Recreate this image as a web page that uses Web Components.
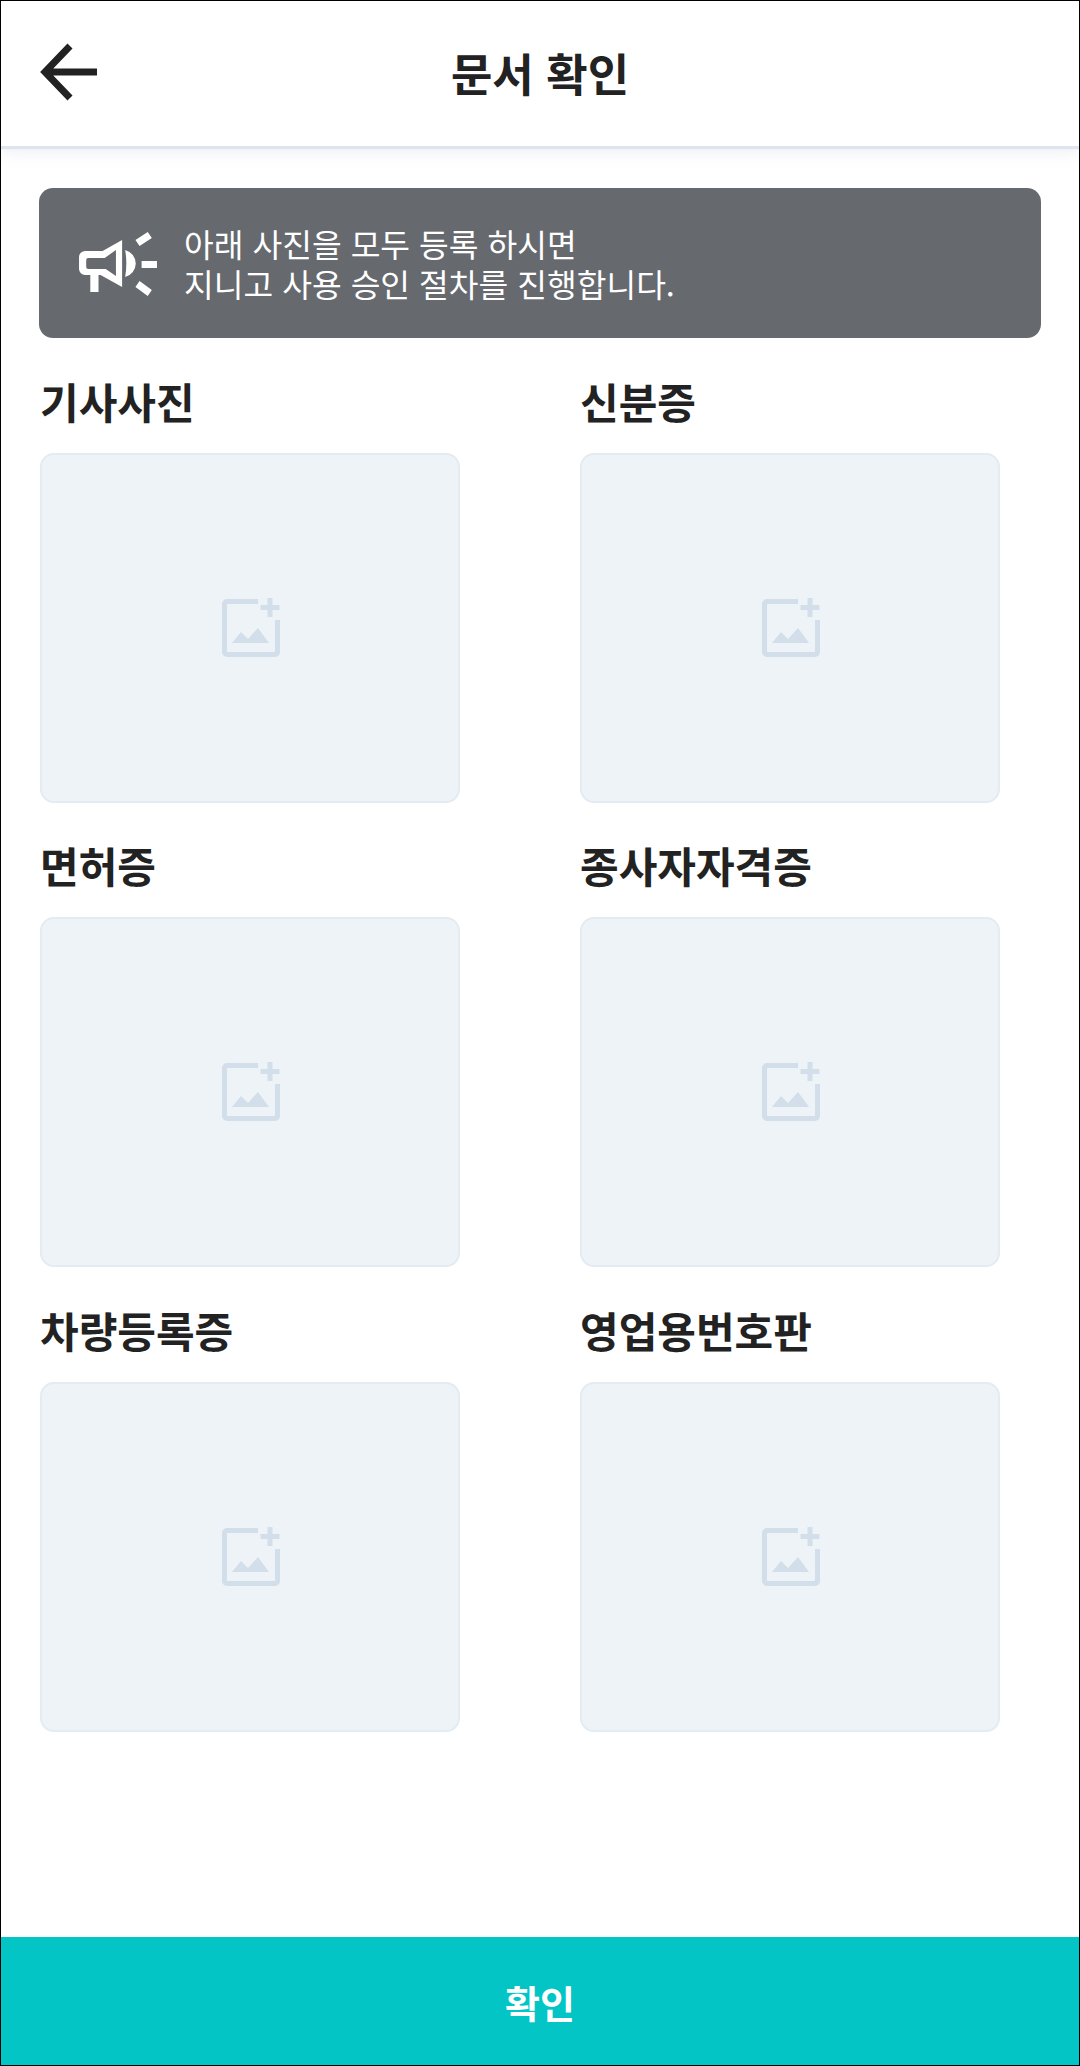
<!DOCTYPE html>
<html lang="ko">
<head>
<meta charset="utf-8">
<title>문서 확인</title>
<style>
    html, body { margin: 0; padding: 0; background: #fff; }
    body { font-family: "Noto Sans CJK KR", "Noto Sans", sans-serif; }
</style>
</head>
<body>
<doc-screen>
    <app-header slot="header">문서 확인</app-header>
    <notice-banner>아래 사진을 모두 등록 하시면<br>지니고 사용 승인 절차를 진행합니다.</notice-banner>
    <photo-grid>
        <photo-slot>기사사진</photo-slot>
        <photo-slot>신분증</photo-slot>
        <photo-slot>면허증</photo-slot>
        <photo-slot>종사자자격증</photo-slot>
        <photo-slot>차량등록증</photo-slot>
        <photo-slot>영업용번호판</photo-slot>
    </photo-grid>
    <confirm-button slot="footer">확인</confirm-button>
</doc-screen>

<script>
class DocScreen extends HTMLElement {
    constructor() {
        super();
        const shadow = this.attachShadow({ mode: 'open' });
        shadow.innerHTML = /*html*/`
        <style>
            :host {
                display: flex;
                flex-direction: column;
                box-sizing: border-box;
                width: 1080px;
                height: 2066px;
                border: 1px solid #000;
                background: #fff;
                overflow: hidden;
            }
            main {
                flex: 1;
                padding: 42px 38px 0 37px;
            }
        </style>
        <slot name="header"></slot>
        <main><slot></slot></main>
        <slot name="footer"></slot>
        `;
    }
}

class AppHeader extends HTMLElement {
    constructor() {
        super();
        const shadow = this.attachShadow({ mode: 'open' });
        shadow.innerHTML = /*html*/`
        <style>
            :host {
                display: block;
                position: relative;
                z-index: 1;
                height: 145px;
                background: #fff;
                box-shadow: 0 3px 1px #dfe5ef, 0 6px 14px rgba(190, 200, 218, 0.3);
            }
            .bar {
                display: flex;
                align-items: center;
                justify-content: center;
                box-sizing: border-box;
                height: 100%;
                padding-bottom: 2px;
                color: #222;
                font-size: 45px;
                font-weight: 700;
            }
            svg { position: absolute; left: 35px; top: 39px; }
        </style>
        <div class="bar">
            <svg width="62" height="64" viewBox="0 0 62 64"><path fill="none" stroke="#222" stroke-width="7" d="M61 32H9M34 6L9 32l25 26"></path></svg>
            <slot></slot>
        </div>
        `;
    }
}

class NoticeBanner extends HTMLElement {
    constructor() {
        super();
        const shadow = this.attachShadow({ mode: 'open' });
        shadow.innerHTML = /*html*/`
        <style>
            :host {
                display: flex;
                align-items: center;
                box-sizing: border-box;
                width: 1002px;
                height: 150px;
                margin-left: 1px;
                padding-left: 39px;
                gap: 26px;
                border-radius: 14px;
                background: #66696e;
                color: #fff;
                font-size: 32.3px;
                line-height: 40px;
            }
            svg { flex: none; }
        </style>
        <svg width="80" height="66" viewBox="0 0 78 66" preserveAspectRatio="none" fill="#fff">
            <path fill-rule="evenodd" d="M43 10V57L22 45H20V62H12V45H7a6 6 0 0 1-6-6V27a6 6 0 0 1 6-6H24zM37 20L26 28H10a2 2 0 0 0-2 2v7a2 2 0 0 0 2 2H27l10 7z"></path>
            <path d="M46 20a14 14 0 0 1 0 27c1.5-9 1.5-18 0-27z"></path>
            <path d="M56 10l12-8 4 6-12 8zM62 31h15v7H62zM60 51l12 9-4 6-12-9z"></path>
        </svg>
        <div><slot></slot></div>
        `;
    }
}

class PhotoGrid extends HTMLElement {
    constructor() {
        super();
        const shadow = this.attachShadow({ mode: 'open' });
        shadow.innerHTML = /*html*/`
        <style>
            :host {
                display: grid;
                grid-template-columns: 420px 420px;
                column-gap: 120px;
                row-gap: 34.4px;
                padding: 35px 0 0 2px;
            }
        </style>
        <slot></slot>
        `;
    }
}

class PhotoSlot extends HTMLElement {
    constructor() {
        super();
        const shadow = this.attachShadow({ mode: 'open' });
        shadow.innerHTML = /*html*/`
        <style>
            :host { display: block; }
            .label {
                color: #222;
                font-size: 42px;
                font-weight: 700;
                line-height: 56px;
                margin-bottom: 24px;
                white-space: nowrap;
            }
            .box {
                display: flex;
                align-items: center;
                justify-content: center;
                box-sizing: border-box;
                height: 350px;
                background: #eef3f7;
                border: 2px solid #e3ebf3;
                border-radius: 14px;
            }
        </style>
        <div class="label"><slot></slot></div>
        <div class="box">
            <svg width="60" height="60" viewBox="0 0 60 60" fill="#d2deea">
                <path d="M38 1H7a5 5 0 0 0-5 5V54a5 5 0 0 0 5 5H55a5 5 0 0 0 5-5V22H55V53a1 1 0 0 1-1 1H8a1 1 0 0 1-1-1V7a1 1 0 0 1 1-1H38z"></path>
                <path d="M47.5 0h5v7h7v5h-7v7h-5v-7h-7V7h7z"></path>
                <path d="M12 45L21 34l7 7L38 30l11 15z"></path>
            </svg>
        </div>
        `;
    }
}

class ConfirmButton extends HTMLElement {
    constructor() {
        super();
        const shadow = this.attachShadow({ mode: 'open' });
        shadow.innerHTML = /*html*/`
        <style>
            :host {
                display: flex;
                align-items: center;
                justify-content: center;
                height: 128px;
                background: #03c5c5;
                color: #fff;
                font-size: 38px;
                font-weight: 700;
            }
        </style>
        <slot></slot>
        `;
    }
}

customElements.define('doc-screen', DocScreen);
customElements.define('app-header', AppHeader);
customElements.define('notice-banner', NoticeBanner);
customElements.define('photo-grid', PhotoGrid);
customElements.define('photo-slot', PhotoSlot);
customElements.define('confirm-button', ConfirmButton);
</script>
</body>
</html>
